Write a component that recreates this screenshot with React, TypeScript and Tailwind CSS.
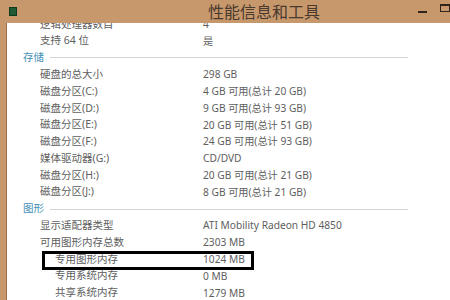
import React from 'react';

type Row =
  | { kind: 'row'; label: string; value: string; sub?: boolean; boxed?: boolean }
  | { kind: 'section'; label: string };

const rows: Row[] = [
  { kind: 'row', label: '逻辑处理器数目', value: '4' },
  { kind: 'row', label: '支持 64 位', value: '是' },
  { kind: 'section', label: '存储' },
  { kind: 'row', label: '硬盘的总大小', value: '298 GB' },
  { kind: 'row', label: '磁盘分区(C:)', value: '4 GB 可用(总计 20 GB)' },
  { kind: 'row', label: '磁盘分区(D:)', value: '9 GB 可用(总计 93 GB)' },
  { kind: 'row', label: '磁盘分区(E:)', value: '20 GB 可用(总计 51 GB)' },
  { kind: 'row', label: '磁盘分区(F:)', value: '24 GB 可用(总计 93 GB)' },
  { kind: 'row', label: '媒体驱动器(G:)', value: 'CD/DVD' },
  { kind: 'row', label: '磁盘分区(H:)', value: '20 GB 可用(总计 21 GB)' },
  { kind: 'row', label: '磁盘分区(J:)', value: '8 GB 可用(总计 21 GB)' },
  { kind: 'section', label: '图形' },
  { kind: 'row', label: '显示适配器类型', value: 'ATI Mobility Radeon HD 4850' },
  { kind: 'row', label: '可用图形内存总数', value: '2303 MB' },
  { kind: 'row', label: '专用图形内存', value: '1024 MB', sub: true, boxed: true },
  { kind: 'row', label: '专用系统内存', value: '0 MB', sub: true },
  { kind: 'row', label: '共享系统内存', value: '1279 MB', sub: true },
];

function App() {
  return (
    <div
      className="w-[450px] h-[300px] overflow-hidden flex flex-col bg-[#c8986d]"
      style={{ fontFamily: '"Noto Sans", "Noto Sans CJK SC", sans-serif' }}
    >
      {/* Title bar */}
      <div className="h-[23px] shrink-0 flex items-center">
        <div className="ml-[9px] w-[8px] h-[9px] bg-[#1f5a34] border border-[#0e3a1f]" />
        <div className="ml-[191px] text-[16px] leading-none text-[#4a3a2e]">性能信息和工具</div>
        <div className="ml-auto flex items-center">
          <div className="w-[9px] h-[2px] bg-[#2e241c] mt-[1px]" />
          <div className="ml-[13px] w-[10px] h-[8px] border-[1.5px] border-[#2e241c] border-t-[2px] mb-[7px]" />
        </div>
      </div>

      {/* Body */}
      <div className="flex-1 flex min-h-0">
        <div className="w-[7px] shrink-0 border-r border-[#9c6f4b]" />
        <div className="flex-1 bg-white overflow-hidden">
          <div className="mt-[-7px] text-[10.5px] text-[#5e5e5e]">
            {rows.map((r, i) =>
              r.kind === 'section' ? (
                <div key={i} className="h-[16.8px] flex items-center">
                  <span className="pl-[16px] text-[#4591b5]">{r.label}</span>
                  <div className="flex-1 ml-[6px] mr-[42px] h-px bg-[#d6d6d6]" />
                </div>
              ) : (
                <div key={i} className="h-[16.8px] flex items-center relative">
                  <div className={`w-[196px] shrink-0 ${r.sub ? 'pl-[48px]' : 'pl-[33px]'}`}>{r.label}</div>
                  <div className="text-[10.2px]">{r.value}</div>
                  {r.boxed && (
                    <div className="absolute left-[35px] w-[212px] top-0 -bottom-[2px] border-[3px] border-black" />
                  )}
                </div>
              )
            )}
          </div>
        </div>
      </div>
    </div>
  );
}

export default App;
